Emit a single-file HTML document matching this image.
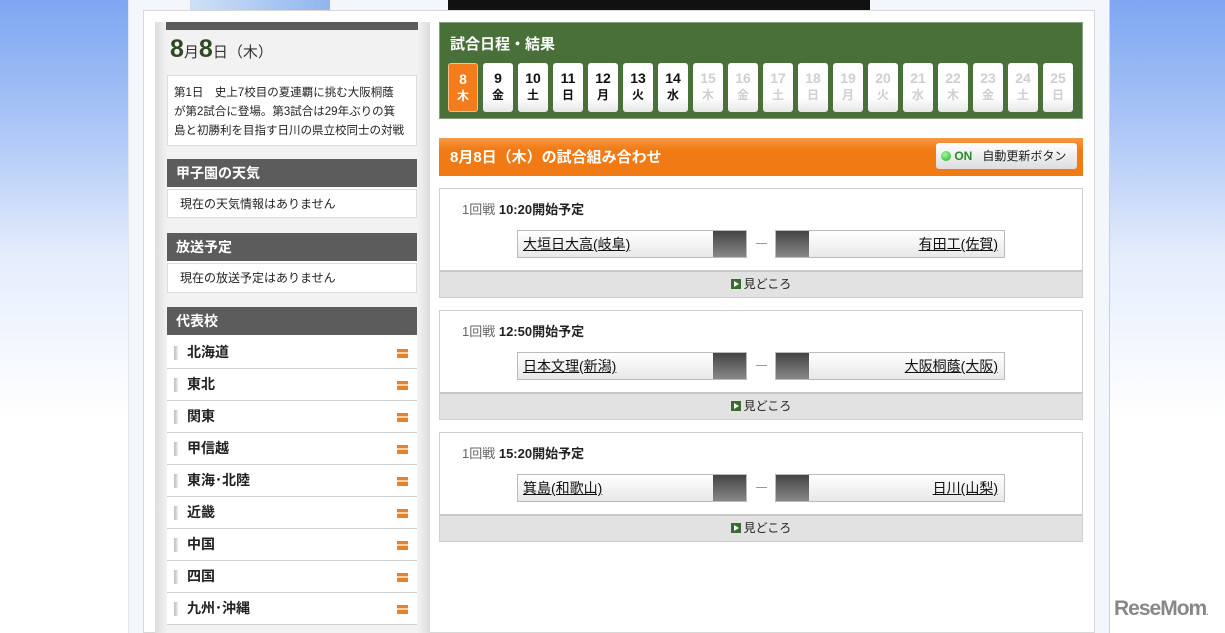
<!DOCTYPE html><html><head><meta charset="utf-8"><style>
*{margin:0;padding:0;box-sizing:border-box}
body{width:1225px;height:633px;overflow:hidden;position:relative;font-family:"Liberation Sans","Noto Sans CJK JP",sans-serif;background:linear-gradient(#7ea6f2 0,#a9c4f6 120px,#e6eefc 260px,#fff 420px);}
.a{position:absolute}
.outer{left:128px;top:0;width:982px;height:633px;background:#f3f6fb;border-right:1px solid #c9d2e0;border-left:1px solid #dfe6f0}
.panel{left:143px;top:10px;width:952px;height:623px;background:#fff;border:1px solid #d8d8d8}
.side{left:155px;top:22px;width:275px;height:611px;background:linear-gradient(90deg,#ddd,#f2f2f2 12px,#f2f2f2 263px,#ddd)}
.hd{background:#5c5c5c;color:#fff;font-weight:bold;font-size:14px;padding-left:9px;line-height:28px;border-bottom:2px solid #fff;box-shadow:0 2px 0 #5c5c5c}
.bx{background:#fff;border:1px solid #ddd;font-size:12px;color:#222}
.li{position:absolute;left:167px;width:250px;height:32px;background:#fff;border-bottom:1px solid #d0d0d0;font-size:14px;font-weight:bold;color:#222;line-height:31px;padding-left:20px}
.li:before{content:"";position:absolute;left:7px;top:9px;width:4px;height:14px;background:linear-gradient(90deg,#bbb,#eee)}
.li:after{content:"";position:absolute;right:9px;top:12px;width:11px;height:9px;background:linear-gradient(#e9802a 0,#e9802a 3px,#f8d2a8 3px,#f8d2a8 5px,#e9802a 5px)}
.day{position:absolute;top:63px;width:30px;height:49px;background:linear-gradient(#fff,#fff 70%,#e6e6e6);border-radius:3px;text-align:center;font-weight:bold;font-size:14px;line-height:17px;padding-top:7px;color:#111}
.day span{display:block;font-size:12px}
.day.off{color:#cfcfcf}
.m{position:absolute;left:439px;width:644px;height:110px;border:1px solid #cfcfcf;background:#fff}
.m .t{position:absolute;left:22px;top:10px;font-size:13px;font-weight:bold;color:#222}
.m .t b{color:#666;font-weight:normal}
.tm{position:absolute;top:41px;width:230px;height:28px;border:1px solid #bbb;background:linear-gradient(#fff,#e8e8e8);font-size:14px;line-height:26px;color:#111;text-decoration:underline}
.sq{position:absolute;top:0;width:33px;height:26px;background:linear-gradient(#444,#888)}
.dash{position:absolute;left:316px;top:54px;width:11px;height:1px;background:#999}
.ft{position:absolute;left:0;bottom:0;width:642px;height:27px;background:#e2e2e2;border-top:2px solid #c8c8c8;text-align:center;font-size:12px;line-height:25px;color:#222}
.ft i{display:inline-block;width:10px;height:10px;background:#3a6b2f;vertical-align:-1px;margin-right:3px;position:relative}
.ft i:after{content:"";position:absolute;left:3px;top:2px;border-left:5px solid #fff;border-top:3px solid transparent;border-bottom:3px solid transparent}
</style></head><body>
<div class="a outer"></div>
<div class="a" style="left:448px;top:0;width:422px;height:10px;background:#111"></div>
<div class="a" style="left:190px;top:0;width:140px;height:10px;background:linear-gradient(90deg,#cfe0f8,#8fb5ee)"></div>
<div class="a panel"></div>
<div class="a side"></div>
<div class="a" style="left:166px;top:22px;width:252px;height:8px;background:#5c5c5c"></div>
<div class="a" style="left:170px;top:35px;font-size:25px;font-weight:bold;color:#2f4a20">8<span style="font-size:15px;font-weight:normal;color:#333">月</span>8<span style="font-size:15px;font-weight:normal;color:#333">日（木）</span></div>
<div class="a bx" style="left:167px;top:75px;width:250px;height:71px;padding:8px 6px;line-height:19px;font-size:11.5px;white-space:nowrap;overflow:hidden">第1日　史上7校目の夏連覇に挑む大阪桐蔭<br>が第2試合に登場。第3試合は29年ぶりの箕<br>島と初勝利を目指す日川の県立校同士の対戦</div>
<div class="a hd" style="left:167px;top:159px;width:250px">甲子園の天気</div>
<div class="a bx" style="left:167px;top:189px;width:250px;height:29px;padding-left:12px;line-height:28px">現在の天気情報はありません</div>
<div class="a hd" style="left:167px;top:233px;width:250px">放送予定</div>
<div class="a bx" style="left:167px;top:263px;width:250px;height:30px;padding-left:12px;line-height:29px">現在の放送予定はありません</div>
<div class="a hd" style="left:167px;top:307px;width:250px">代表校</div>
<div class="li" style="top:337px">北海道</div>
<div class="li" style="top:369px">東北</div>
<div class="li" style="top:401px">関東</div>
<div class="li" style="top:433px">甲信越</div>
<div class="li" style="top:465px">東海･北陸</div>
<div class="li" style="top:497px">近畿</div>
<div class="li" style="top:529px">中国</div>
<div class="li" style="top:561px">四国</div>
<div class="li" style="top:593px">九州･沖縄</div>

<div class="a" style="left:439px;top:22px;width:644px;height:97px;background:#4a703a;border:1px solid #8aa07a"></div>
<div class="a" style="left:450px;top:33px;color:#fff;font-weight:bold;font-size:15px">試合日程・結果</div>
<div class="day" style="left:448px;background:#f37d1c;color:#fff;border:1px solid #f9c08a">8<span>木</span></div>
<div class="day" style="left:483px">9<span>金</span></div>
<div class="day" style="left:518px">10<span>土</span></div>
<div class="day" style="left:553px">11<span>日</span></div>
<div class="day" style="left:588px">12<span>月</span></div>
<div class="day" style="left:623px">13<span>火</span></div>
<div class="day" style="left:658px">14<span>水</span></div>
<div class="day off" style="left:693px">15<span>木</span></div>
<div class="day off" style="left:728px">16<span>金</span></div>
<div class="day off" style="left:763px">17<span>土</span></div>
<div class="day off" style="left:798px">18<span>日</span></div>
<div class="day off" style="left:833px">19<span>月</span></div>
<div class="day off" style="left:868px">20<span>火</span></div>
<div class="day off" style="left:903px">21<span>水</span></div>
<div class="day off" style="left:938px">22<span>木</span></div>
<div class="day off" style="left:973px">23<span>金</span></div>
<div class="day off" style="left:1008px">24<span>土</span></div>
<div class="day off" style="left:1043px">25<span>日</span></div>

<div class="a" style="left:439px;top:138px;width:644px;height:38px;background:linear-gradient(#f59a45,#f27a14 30%,#f27a14);"></div>
<div class="a" style="left:450px;top:146px;color:#fff;font-weight:bold;font-size:15px">8月8日（木）の試合組み合わせ</div>
<div class="a" style="left:936px;top:143px;width:141px;height:26px;background:linear-gradient(#fff,#ddd);border-radius:3px;font-size:12px;line-height:26px;color:#222;padding-left:5px"><span style="display:inline-block;width:10px;height:10px;border-radius:50%;background:radial-gradient(circle at 40% 35%,#9f9,#2a2);vertical-align:-1px"></span><b style="color:#2a8a2a"> ON</b>&nbsp;&nbsp; 自動更新ボタン</div>

<div class="m" style="top:188px"><div class="t"><b>1回戦</b> 10:20開始予定</div>
<div class="tm" style="left:77px;padding-left:5px">大垣日大高(岐阜)<div class="sq" style="right:0"></div></div>
<div class="dash"></div>
<div class="tm" style="left:335px;text-align:right;padding-right:6px"><div class="sq" style="left:0"></div>有田工(佐賀)</div>
<div class="ft"><i></i>見どころ</div></div>

<div class="m" style="top:310px"><div class="t"><b>1回戦</b> 12:50開始予定</div>
<div class="tm" style="left:77px;padding-left:5px">日本文理(新潟)<div class="sq" style="right:0"></div></div>
<div class="dash"></div>
<div class="tm" style="left:335px;text-align:right;padding-right:6px"><div class="sq" style="left:0"></div>大阪桐蔭(大阪)</div>
<div class="ft"><i></i>見どころ</div></div>

<div class="m" style="top:432px"><div class="t"><b>1回戦</b> 15:20開始予定</div>
<div class="tm" style="left:77px;padding-left:5px">箕島(和歌山)<div class="sq" style="right:0"></div></div>
<div class="dash"></div>
<div class="tm" style="left:335px;text-align:right;padding-right:6px"><div class="sq" style="left:0"></div>日川(山梨)</div>
<div class="ft"><i></i>見どころ</div></div>

<div class="a" style="left:1114px;top:597px;font-size:21px;font-weight:bold;color:#888;letter-spacing:-1px">ReseMom<span style="font-size:8px">.</span></div>
</body></html>
